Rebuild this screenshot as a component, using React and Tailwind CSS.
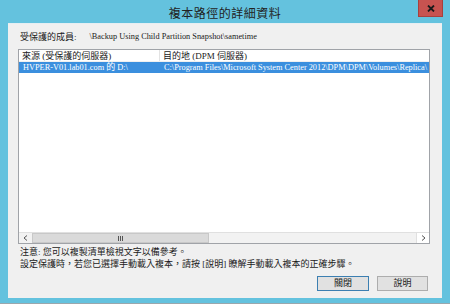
export default function App() {
  const font = { fontFamily: '"Liberation Serif", "Noto Sans CJK TC", serif' };
  return (
    <div
      className="w-[450px] h-[304px] bg-[#64c2de] flex flex-col px-[8px] pb-[5px] border-b border-[#9aa7ad] relative text-[#1a1a1a]"
      style={font}
    >
      <div className="h-[23px] flex items-center justify-center shrink-0">
        <span className="text-[12px] leading-none text-[#222] tracking-[0.5px] pt-[4px]">複本路徑的詳細資料</span>
      </div>
      <div className="absolute top-0 right-[7px] w-[25px] h-[17px] bg-[#c75350] border border-[#a8403d] border-t-0 flex items-center justify-center">
        <svg width="8" height="7" viewBox="0 0 8 7">
          <path d="M1 0.5 L7 6.5 M7 0.5 L1 6.5" stroke="#1a1a1a" strokeWidth="1.8" />
        </svg>
      </div>
      <div className="flex-1 bg-[#f0f0f0] border-t border-[#e6eef2] flex flex-col pl-[10px] pr-[12px]">
        <div className="h-[25px] flex items-center gap-[13px] pl-[2px] pt-[2px] text-[9px]">
          <span>受保護的成員:</span>
          <span className="text-[8.3px]">\Backup Using Child Partition Snapshot\sametime</span>
        </div>
        <div className="h-[195px] border border-[#a0a3a8] bg-white flex flex-col">
          <div className="h-[12px] flex text-[9px] leading-[12px] border-b border-[#f0f0f0]">
            <div className="w-[141px] pl-[3px] border-r border-[#e3e3e3]">來源 (受保護的伺服器)</div>
            <div className="pl-[3px]">目的地 (DPM 伺服器)</div>
          </div>
          <div className="h-[11px] flex text-[8.3px] leading-[11px] bg-[#3b8fde] text-white whitespace-nowrap overflow-hidden">
            <div className="w-[142px] pl-[4px] shrink-0">HVPER-V01.lab01.com <span className="text-[9px]">的</span> D:\</div>
            <div className="pl-[3px]">C:\Program Files\Microsoft System Center 2012\DPM\DPM\Volumes\Replica\</div>
          </div>
          <div className="flex-1" />
          <div className="h-[11px] flex bg-[#f2f2f2] border-t border-[#e0e0e0]">
            <div className="w-[13px] flex items-center justify-center">
              <svg width="5" height="6" viewBox="0 0 5 6">
                <path d="M4 0.5 L1 3 L4 5.5" stroke="#555" fill="none" strokeWidth="1" />
              </svg>
            </div>
            <div className="w-[177px] bg-[#dadada] border border-[#c8c8c8] flex items-center justify-center">
              <svg width="6" height="5" viewBox="0 0 6 5">
                <path d="M0.5 0 V5 M2.5 0 V5 M4.5 0 V5" stroke="#555" strokeWidth="1" />
              </svg>
            </div>
            <div className="flex-1" />
            <div className="w-[13px] flex items-center justify-center bg-white border-l border-[#e0e0e0]">
              <svg width="5" height="6" viewBox="0 0 5 6">
                <path d="M1 0.5 L4 3 L1 5.5" stroke="#555" fill="none" strokeWidth="1" />
              </svg>
            </div>
          </div>
        </div>
        <div className="pl-[2px] pt-[3px] text-[9px] leading-[11.5px]">
          <div>注意: 您可以複製清單檢視文字以備參考。</div>
          <div>設定保護時，若您已選擇手動載入複本，請按 [說明] 瞭解手動載入複本的正確步驟。</div>
        </div>
        <div className="flex-1" />
        <div className="flex justify-end gap-[8px] pr-[2px] pb-[7px]">
          <button className="w-[52px] h-[15px] bg-[#e1e1e1] border border-[#3c7fb1] text-[9px] leading-none flex items-center justify-center">關閉</button>
          <button className="w-[51px] h-[15px] bg-[#e1e1e1] border border-[#adadad] text-[9px] leading-none flex items-center justify-center">說明</button>
        </div>
      </div>
    </div>
  );
}
